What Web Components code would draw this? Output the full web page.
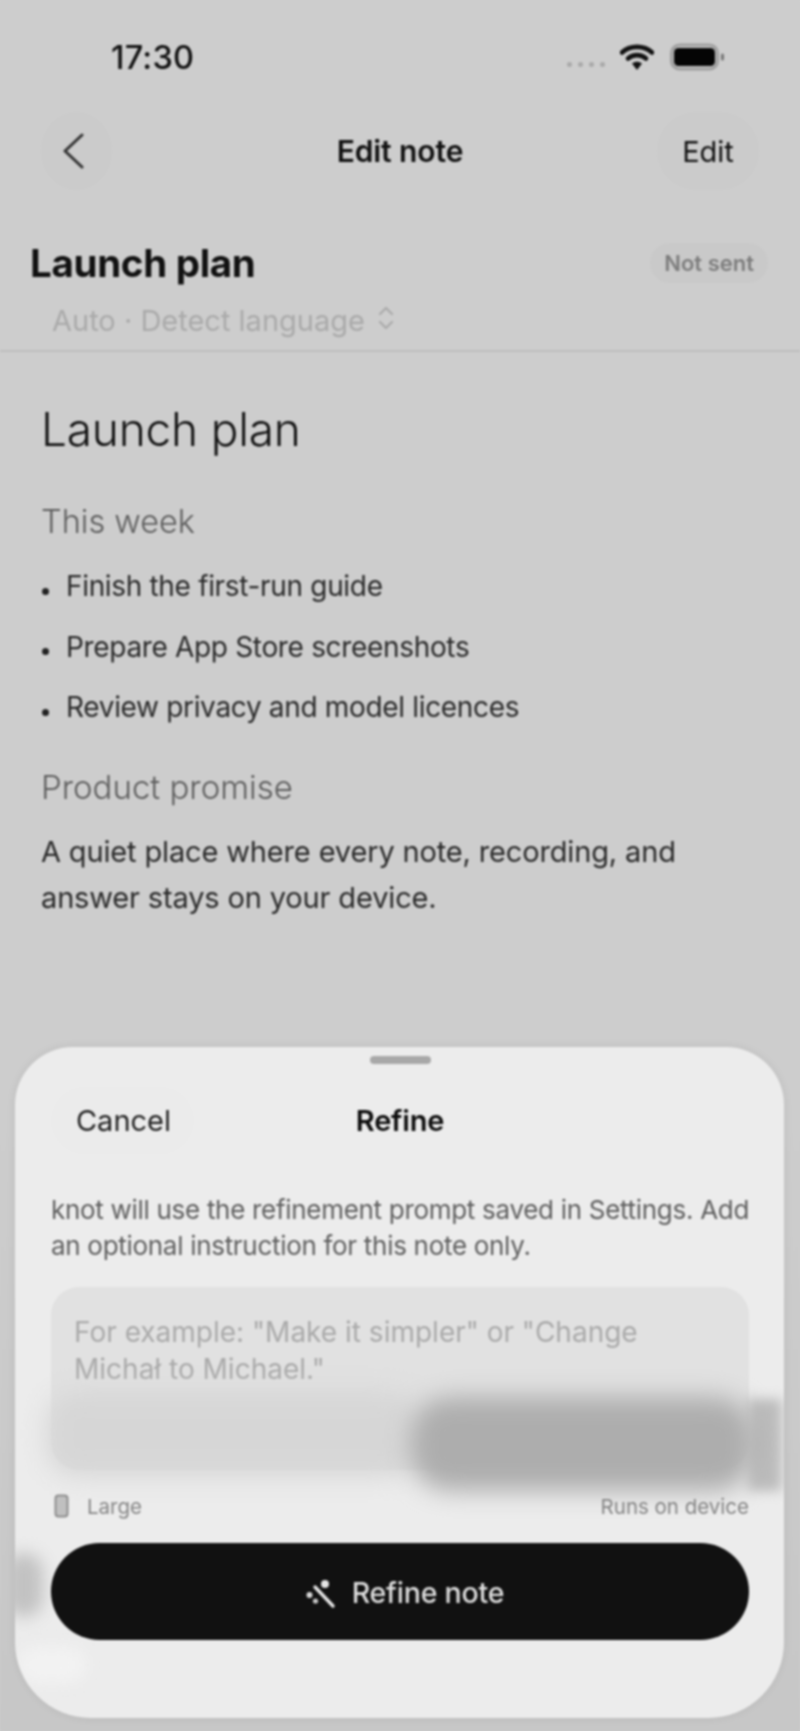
<!DOCTYPE html>
<html>
<head>
<meta charset="utf-8">
<title>Edit note</title>
<style>
  html, body { margin: 0; padding: 0; background: #cdcdcd; }
  body { font-family: Inter, "Liberation Sans", sans-serif; width: 800px; height: 1731px; overflow: hidden; }
  app-screen { filter: blur(.8px); }
</style>
</head>
<body>

<template id="app-screen">
  <style>
    :host { display: block; position: relative; width: 800px; height: 1731px; background: linear-gradient(#cdcdcd 65%, #c7c7c7); color: #111; }
  </style>
  <slot></slot>
</template>

<template id="status-bar">
  <style>
    :host { display: flex; align-items: center; height: 112px; box-sizing: border-box; padding: 0 74px 0 111px; }
    #row { display: flex; align-items: center; width: 100%; height: 30px; margin-top: 2px; }
    #time { font-size: 32.500px; font-weight: 500; letter-spacing: .2px; flex: 1; }
    #dots { display: flex; gap: 6px; margin: 14px 15px 0 0; }
    #dots i { width: 5px; height: 5px; border-radius: 50%; background: #a9a9a9; }
    svg { display: block; }
  </style>
  <div id="row">
    <div id="time"><slot></slot></div>
    <div id="dots"><i></i><i></i><i></i><i></i></div>
    <svg width="34" height="28" viewBox="0 0 34 28" style="margin-right:16px">
      <path d="M2 9.5 C10 2 24 2 32 9.5" fill="none" stroke="#111" stroke-width="4.6" stroke-linecap="round"/>
      <path d="M8 15.5 C13 11 21 11 26 15.5" fill="none" stroke="#111" stroke-width="4.6" stroke-linecap="round"/>
      <path d="M12 20.5 L17 27 L22 20.5 C19 18 15 18 12 20.5 Z" fill="#111"/>
    </svg>
    <svg width="56" height="28" viewBox="0 0 56 28">
      <rect x="1.500" y="2" width="46" height="24" rx="8" fill="none" stroke="#a0a0a0" stroke-width="3"/>
      <rect x="4" y="5" width="41" height="18" rx="4.500" fill="#050505"/>
      <rect x="51" y="10.500" width="3" height="7" rx="1.500" fill="#777"/>
    </svg>
  </div>
</template>

<template id="nav-bar">
  <style>
    :host { display: grid; grid-template-columns: 1fr auto 1fr; align-items: center; height: 78px; padding: 0 41px; }
    #back { width: 71px; height: 78px; border-radius: 50%; background: #cbcbcb; display: flex; align-items: center; justify-content: center; }
    #back svg { display: block; margin-left: -8px; }
    #title { font-size: 30px; font-weight: 600; letter-spacing: -.1px; }
    #action { justify-self: end; width: 102px; height: 78px; border-radius: 39px; background: #cbcbcb; display: flex; align-items: center; justify-content: center; font-size: 29px; font-weight: 400; }
  </style>
  <div><div id="back">
    <svg width="22" height="36" viewBox="0 0 22 36"><path d="M20 2 L3 18 L20 34" fill="none" stroke="#333" stroke-width="3" stroke-linecap="round" stroke-linejoin="round"/></svg>
  </div></div>
  <div id="title"><slot name="title"></slot></div>
  <div id="action"><slot name="action"></slot></div>
</template>

<template id="note-head">
  <style>
    :host { display: block; height: 162px; box-sizing: border-box; padding: 53px 32px 0 30px; border-bottom: 2px solid #bebebe; }
    #top { display: flex; justify-content: space-between; align-items: center; height: 40px; }
    #name { font-size: 38.500px; font-weight: 700; letter-spacing: -.3px; }
    #state { font-size: 22px; font-weight: 600; color: #7d7d7d; background: #c9c9c9; height: 40px; line-height: 40px; padding: 0 14px; border-radius: 20px; }
    #lang { display: flex; align-items: center; gap: 12px; height: 36px; margin: 19px 0 0 22px; color: #aaa; font-size: 29px; font-weight: 400; }
    svg { display: block; margin-top: -4px; }
  </style>
  <div id="top">
    <div id="name"><slot name="name"></slot></div>
    <div id="state"><slot name="state"></slot></div>
  </div>
  <div id="lang"><slot name="lang"></slot>
    <svg width="18" height="26" viewBox="0 0 18 26"><path d="M3 9 L9 3 L15 9 M3 17 L9 23 L15 17" fill="none" stroke="#aaa" stroke-width="2.200" stroke-linecap="round" stroke-linejoin="round"/></svg>
  </div>
</template>

<template id="note-body">
  <style>
    :host { display: block; padding: 49px 41px 0; color: #2a2a2a; font-size: 29px; }
    ::slotted(h1) { margin: 0; font-size: 46px; line-height: 56px; font-weight: 300; color: #111; letter-spacing: -.2px; }
    ::slotted(h2) { margin: 45px 0 0; font-size: 32.500px; line-height: 40px; font-weight: 300; color: #5c5c5c; }
    ::slotted(h2.later) { margin-top: 40px; font-size: 33px; }
    ::slotted(p) { margin: 22px 0 0; font-size: 29px; line-height: 46px; font-weight: 400; color: #2a2a2a; letter-spacing: -.15px; }
  </style>
  <slot></slot>
</template>

<template id="note-list">
  <style>
    :host { display: flex; flex-direction: column; gap: 20.500px; margin-top: 24px; }
  </style>
  <slot></slot>
</template>

<template id="note-item">
  <style>
    :host { display: flex; align-items: center; height: 40px; font-size: 28px; font-weight: 400; color: #2a2a2a; letter-spacing: -.33px; }
    #dot { width: 7px; height: 7px; border-radius: 50%; background: #222; margin: 10px 17px 0 1px; flex: none; }
  </style>
  <div id="dot"></div><slot></slot>
</template>

<template id="refine-sheet">
  <style>
    :host { display: block; position: absolute; left: 15px; top: 1047px; width: 769px; height: 671px; box-sizing: border-box; padding: 0 35px 0 36px; background: #ececec; border-radius: 58px 58px 76px 76px; overflow: hidden; box-shadow: 0 0 10px rgba(0,0,0,.08); }
    #handle { width: 61px; height: 8px; border-radius: 4px; background: #a8a8a8; margin: 9px auto 23px; }
    #head { display: grid; grid-template-columns: 1fr auto 1fr; align-items: center; height: 67px; font-size: 29px; }
    #cancel { width: 143px; height: 67px; border-radius: 34px; background: #ebebeb; display: flex; align-items: center; justify-content: center; color: #222; padding-left: 2px; box-sizing: border-box; }
    #title { font-weight: 600; color: #0c0c0c; letter-spacing: -.2px; }
    #desc { margin: 38px -8px 0 0; font-size: 26px; line-height: 36px; color: #5f5f5f; letter-spacing: -.3px; }
    #input { position: relative; margin-top: 23px; height: 183px; box-sizing: border-box; padding: 27px 23px 0; background: #e1e1e1; border-radius: 28px; font-size: 28px; line-height: 37px; color: #aaa; }
    #foot { position: relative; display: flex; align-items: center; justify-content: space-between; height: 30px; margin-top: 21px; font-size: 20.500px; color: #858585; }
    #size { display: flex; align-items: center; gap: 18px; margin-left: 3px; }
    #go { position: relative; margin-top: 22px; height: 97px; box-sizing: border-box; padding: 2px 0 0 14px; border-radius: 49px; background: #111; color: #dedede; display: flex; align-items: center; justify-content: center; gap: 16px; font-size: 28.500px; font-weight: 500; letter-spacing: -.2px; }
    #go svg { margin: 2px 0 0 -4px; }
    svg { display: block; }
    .smear { position: absolute; filter: blur(12px); }
  </style>
  <div id="handle"></div>
  <div id="head">
    <div id="cancel"><slot name="cancel"></slot></div>
    <div id="title"><slot name="title"></slot></div>
    <div></div>
  </div>
  <div id="desc"><slot name="desc"></slot></div>
  <div id="input"><slot name="hint"></slot></div>
  <div class="smear" style="left:32px;top:345px;width:370px;height:84px;background:#d6d6d6;border-radius:30px"></div>
  <div class="smear" style="left:733px;top:352px;width:34px;height:92px;background:#bcbcbc;filter:blur(6px)"></div>
  <div class="smear" style="left:395px;top:350px;width:345px;height:94px;background:#adadad;border-radius:40px"></div>
  <div class="smear" style="left:-10px;top:506px;width:38px;height:64px;background:#c2c2c2;border-radius:24px;filter:blur(8px)"></div>
  <div class="smear" style="left:2px;top:600px;width:70px;height:36px;background:#f2f2f2;border-radius:18px;filter:blur(8px)"></div>
  <div id="foot">
    <div id="size">
      <svg width="15" height="24" viewBox="0 0 15 24"><rect x="1.500" y="1.500" width="12" height="21" rx="3" fill="#c0c0c0" stroke="#8e8e8e" stroke-width="2"/></svg>
      <slot name="size"></slot>
    </div>
    <slot name="where"></slot>
  </div>
  <div id="go">
    <svg width="30" height="30" viewBox="0 0 30 30">
      <path d="M9 8 L27 27" fill="none" stroke="#e6e6e6" stroke-width="3.400" stroke-linecap="round"/>
      <circle cx="19" cy="5" r="4" fill="#e6e6e6"/>
      <circle cx="3.500" cy="16" r="3" fill="#d8d8d8"/>
      <circle cx="9.500" cy="22" r="2.600" fill="#c8c8c8"/>
    </svg>
    <slot name="go"></slot>
  </div>
</template>

<script>
  // every element just clones its template of the same name into an open shadow root
  class TemplatedElement extends HTMLElement {
    constructor() {
      super();
      const tpl = document.getElementById(this.localName);
      this.attachShadow({ mode: "open" }).appendChild(tpl.content.cloneNode(true));
    }
  }
  ["app-screen", "status-bar", "nav-bar", "note-head", "note-body", "note-list", "note-item", "refine-sheet"].forEach((name) => {
    customElements.define(name, class extends TemplatedElement {});
  });
</script>

<app-screen>
  <status-bar>17:30</status-bar>
  <nav-bar>
    <span slot="title">Edit note</span>
    <span slot="action">Edit</span>
  </nav-bar>
  <note-head>
    <span slot="name">Launch plan</span>
    <span slot="state">Not sent</span>
    <span slot="lang">Auto · Detect language</span>
  </note-head>
  <note-body>
    <h1>Launch plan</h1>
    <h2>This week</h2>
    <note-list>
      <note-item>Finish the first-run guide</note-item>
      <note-item>Prepare App Store screenshots</note-item>
      <note-item>Review privacy and model licences</note-item>
    </note-list>
    <h2 class="later">Product promise</h2>
    <p>A quiet place where every note, recording, and answer stays on your device.</p>
  </note-body>
  <refine-sheet>
    <span slot="cancel">Cancel</span>
    <span slot="title">Refine</span>
    <span slot="desc">knot will use the refinement prompt saved in Settings. Add an optional instruction for this note only.</span>
    <span slot="hint">For example: "Make it simpler" or "Change Michał to Michael."</span>
    <span slot="size">Large</span>
    <span slot="where">Runs on device</span>
    <span slot="go">Refine note</span>
  </refine-sheet>
</app-screen>

</body>
</html>
